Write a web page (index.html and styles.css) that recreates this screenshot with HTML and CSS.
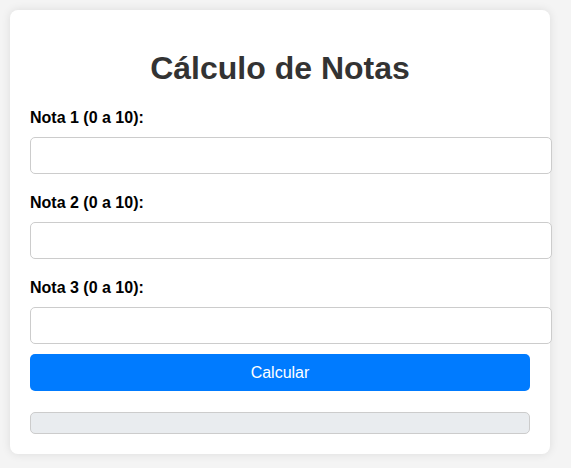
FILE: index.html
```html
<!DOCTYPE html>
<html lang="pt">
<head>
<meta charset="utf-8">
<title>Cálculo de Notas</title>
<link rel="stylesheet" href="styles.css">
</head>
<body>
<div class="container">
  <h1 class="title">Cálculo de Notas</h1>
  <label class="label" for="n1">Nota 1 (0 a 10):</label>
  <input class="field" id="n1" type="number">
  <label class="label" for="n2">Nota 2 (0 a 10):</label>
  <input class="field" id="n2" type="number">
  <label class="label" for="n3">Nota 3 (0 a 10):</label>
  <input class="field" id="n3" type="number">
  <button class="btn" type="button">Calcular</button>
  <div class="result"></div>
</div>
</body>
</html>
```

FILE: styles.css
```css
html, body {
  margin: 0;
  padding: 0;
}
body {
  background: #f4f4f4;
  font-family: "Liberation Sans", Arial, sans-serif;
  padding: 10px;
}
.container {
  width: 500px;
  background: #fff;
  padding: 20px;
  border-radius: 8px;
  box-shadow: 0 0 10px rgba(0, 0, 0, 0.1);
}
.title {
  font-size: 32px;
  font-weight: bold;
  color: #333;
  text-align: center;
  margin: 20px 0 22px;
  line-height: 37px;
}
.label {
  display: block;
  font-size: 16px;
  font-weight: bold;
  color: #000;
  line-height: 18px;
  margin-bottom: 10px;
}
.field {
  display: block;
  width: 100%;
  padding: 10px;
  border: 1px solid #ccc;
  border-radius: 5px;
  font-size: 13.33px;
  margin: 0 0 20px;
  background: #fff;
  box-sizing: content-box;
  height: 15px;
}
.field:last-of-type {
  margin-bottom: 10px;
}
.btn {
  display: block;
  width: 100%;
  height: 37px;
  background: #007bff;
  color: #fff;
  border: none;
  border-radius: 5px;
  font-family: "Liberation Sans", Arial, sans-serif;
  font-size: 16px;
  padding: 0;
  margin: 0 0 21px;
}
.result {
  height: 20px;
  background: #e9ecef;
  border: 1px solid #ccc;
  border-radius: 5px;
}
```
